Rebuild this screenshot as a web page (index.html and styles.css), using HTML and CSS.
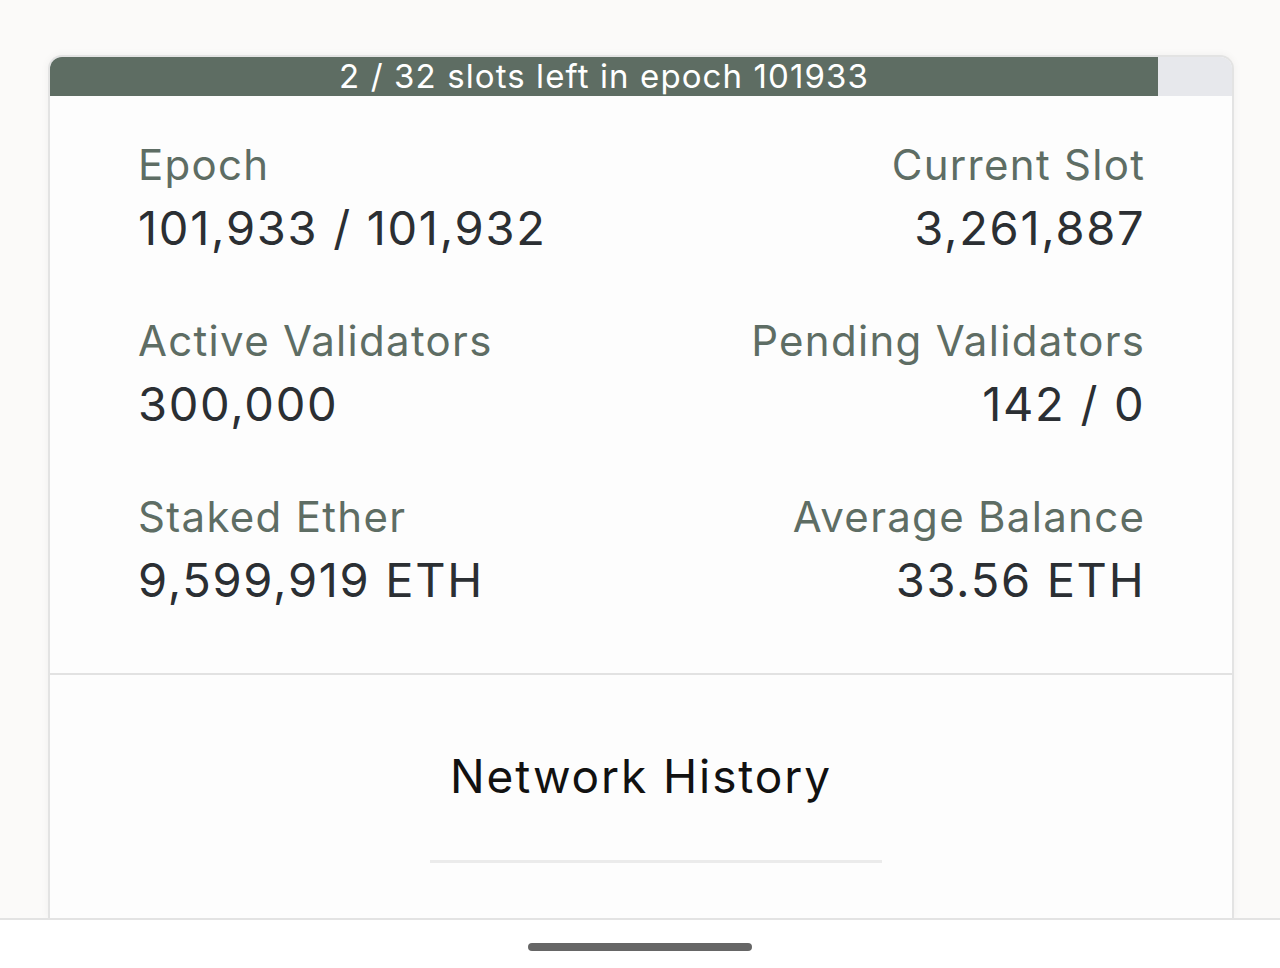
FILE: index.html
```html
<!DOCTYPE html>
<html>
<head>
<meta charset="utf-8">
<link rel="stylesheet" href="styles.css">
</head>
<body>
<div class="screen">
  <div class="card">
    <div class="progress">
      <div class="progress-fill" style="width: 93.75%">
        <span class="progress-text">2 / 32 slots left in epoch 101933</span>
      </div>
    </div>
    <div class="stats">
      <div class="stat">
        <div class="label">Epoch</div>
        <div class="value">101,933 / 101,932</div>
      </div>
      <div class="stat right">
        <div class="label">Current Slot</div>
        <div class="value">3,261,887</div>
      </div>
      <div class="stat">
        <div class="label">Active Validators</div>
        <div class="value">300,000</div>
      </div>
      <div class="stat right">
        <div class="label">Pending Validators</div>
        <div class="value">142 / 0</div>
      </div>
      <div class="stat">
        <div class="label">Staked Ether</div>
        <div class="value">9,599,919 ETH</div>
      </div>
      <div class="stat right">
        <div class="label">Average Balance</div>
        <div class="value">33.56 ETH</div>
      </div>
    </div>
    <div class="history">
      <div class="history-title">Network History</div>
      <div class="history-line"></div>
    </div>
  </div>
  <div class="navbar">
    <div class="home-indicator"></div>
  </div>
</div>
</body>
</html>
```

FILE: styles.css
```css
* { box-sizing: border-box; }
html, body {
  margin: 0;
  padding: 0;
  background: #fbfaf9;
  font-family: Inter, "Noto Sans", sans-serif;
}
.screen {
  width: 1280px;
  height: 968px;
  overflow: hidden;
  display: flex;
  flex-direction: column;
}
.card {
  margin: 55px 0 0 48px;
  width: 1186px;
  height: 863px;
  background: #fdfdfd;
  border: 2px solid #e3e3e3;
  border-bottom: none;
  border-radius: 14px 14px 0 0;
  box-shadow: 0 0 8px rgba(0,0,0,0.05);
  overflow: hidden;
  flex: none;
}
.progress {
  height: 39px;
  background: #e7e8ec;
  display: flex;
}
.progress-fill {
  background: #5e6d63;
  display: flex;
  align-items: center;
  justify-content: center;
}
.progress-text {
  color: #ffffff;
  font-size: 33px;
  line-height: 39px;
  letter-spacing: 1.1px;
  white-space: nowrap;
}
.stats {
  display: grid;
  grid-template-columns: 1fr 1fr;
  row-gap: 50px;
  padding: 41px 88px 58px 88px;
  border-bottom: 2px solid #e2e2e2;
}
.stat { display: flex; flex-direction: column; }
.stat.right { text-align: right; }
.stat.right .label,
.stat.right .value { margin-right: -1.3px; }
.label {
  color: #5e6d64;
  font-size: 42px;
  line-height: 56px;
  letter-spacing: 1.3px;
}
.value {
  color: #2b2f33;
  font-size: 47px;
  line-height: 70px;
  letter-spacing: 1.7px;
}
.history {
  display: flex;
  flex-direction: column;
  align-items: center;
  padding-top: 70px;
}
.history-title {
  color: #111111;
  font-size: 46px;
  line-height: 62px;
  letter-spacing: 1.9px;
}
.history-line {
  margin-top: 53px;
  margin-left: 29px;
  width: 452px;
  height: 3px;
  background: #ebebeb;
}
.navbar {
  flex: 1;
  background: #ffffff;
  border-top: 2px solid #e3e3e3;
  display: flex;
  justify-content: center;
  padding-top: 23px;
}
.home-indicator {
  width: 224px;
  height: 8px;
  border-radius: 4px;
  background: #666666;
}
```
